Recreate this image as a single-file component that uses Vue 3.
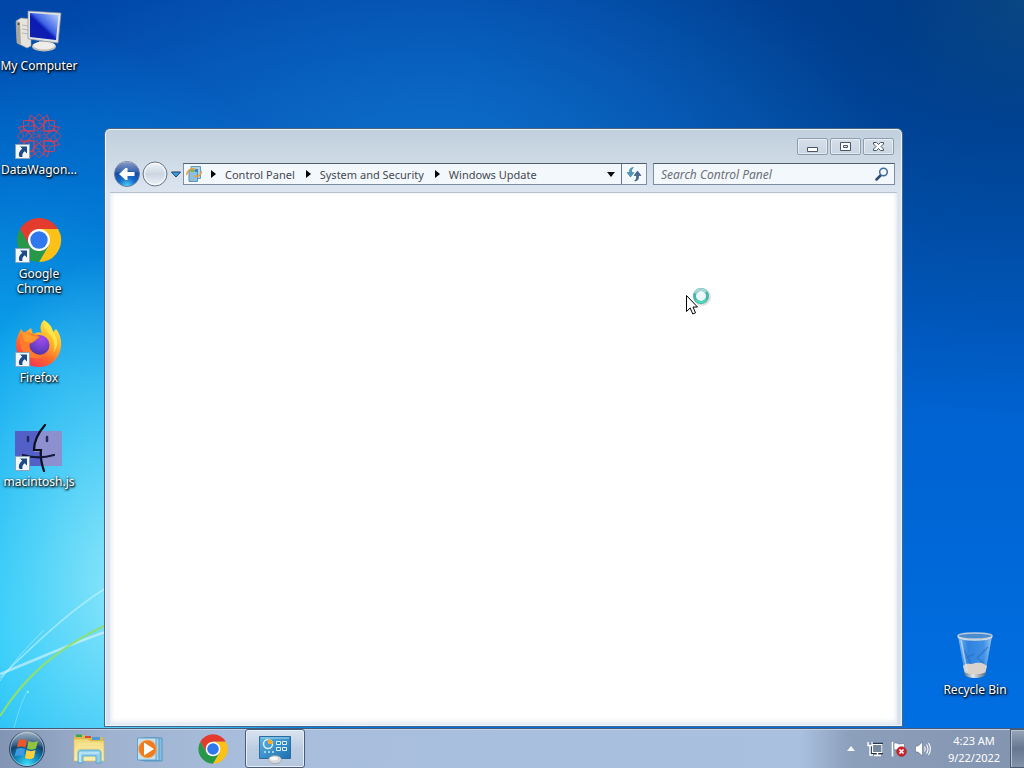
<script setup>
import { ref } from 'vue';

const search = ref('');

const shortcuts = [
  { id: 'computer', label: 'My Computer', linked: false },
  { id: 'wagon', label: 'DataWagon...', linked: true },
  { id: 'chrome', label: 'Google Chrome', linked: true },
  { id: 'firefox', label: 'Firefox', linked: true },
  { id: 'mac', label: 'macintosh.js', linked: true }
];

const crumbs = ['Control Panel', 'System and Security', 'Windows Update'];

const tasks = [
  { id: 'explorer', label: 'Windows Explorer', active: false },
  { id: 'media', label: 'Windows Media Player', active: false },
  { id: 'chrome', label: 'Google Chrome', active: false },
  { id: 'panel', label: 'Control Panel', active: true }
];

// angles of the rosette petals
const petals = [0, 45, 90, 135, 180, 225, 270, 315];
</script>

<template>
  <div class="screen">
    <!-- Icon library -->
    <svg class="library" aria-hidden="true">
      <defs>
        <linearGradient id="g-screen" x1="0" y1="1" x2="1" y2="0">
          <stop offset="0" stop-color="#1322a8" />
          <stop offset="0.45" stop-color="#0a1cb4" />
          <stop offset="0.55" stop-color="#3c62e4" />
          <stop offset="1" stop-color="#bcd6ff" />
        </linearGradient>
        <linearGradient id="g-fox" x1="0.8" y1="0" x2="0.2" y2="1">
          <stop offset="0" stop-color="#fff04a" />
          <stop offset="0.35" stop-color="#ffb52c" />
          <stop offset="0.65" stop-color="#ff6a2e" />
          <stop offset="1" stop-color="#f0265c" />
        </linearGradient>
        <radialGradient id="g-globe" cx="0.6" cy="0.2" r="0.9">
          <stop offset="0" stop-color="#a04cf0" />
          <stop offset="0.6" stop-color="#6a3fc8" />
          <stop offset="1" stop-color="#4a2f9a" />
        </radialGradient>
        <linearGradient id="g-bin" x1="0" y1="0" x2="1" y2="0">
          <stop offset="0" stop-color="#a5cdf4" stop-opacity="0.8" />
          <stop offset="0.3" stop-color="#4d91e0" stop-opacity="0.6" />
          <stop offset="0.75" stop-color="#6aa8ea" stop-opacity="0.6" />
          <stop offset="1" stop-color="#c2dcf6" stop-opacity="0.8" />
        </linearGradient>
        <linearGradient id="g-base" x1="0" y1="0" x2="1" y2="0">
          <stop offset="0" stop-color="#5b6f85" />
          <stop offset="0.4" stop-color="#e4e9ed" />
          <stop offset="1" stop-color="#54677c" />
        </linearGradient>
        <radialGradient id="g-orb" cx="0.5" cy="0.95" r="0.9">
          <stop offset="0" stop-color="#3fe0f8" />
          <stop offset="0.35" stop-color="#1390c4" />
          <stop offset="0.7" stop-color="#123f6c" />
          <stop offset="1" stop-color="#4d6f92" />
        </radialGradient>
        <linearGradient id="g-gloss" x1="0" y1="0" x2="0" y2="1">
          <stop offset="0" stop-color="#fff" stop-opacity="0.75" />
          <stop offset="1" stop-color="#fff" stop-opacity="0.15" />
        </linearGradient>
        <radialGradient id="g-back" cx="0.5" cy="1" r="0.9">
          <stop offset="0" stop-color="#4fd8ff" />
          <stop offset="0.4" stop-color="#1769c8" />
          <stop offset="1" stop-color="#12358c" />
        </radialGradient>
        <linearGradient id="g-forward" x1="0" y1="0" x2="0" y2="1">
          <stop offset="0" stop-color="#f3f6fa" />
          <stop offset="0.5" stop-color="#ccd6e2" />
          <stop offset="1" stop-color="#eef3f8" />
        </linearGradient>
        <linearGradient id="g-folder" x1="0" y1="0" x2="0" y2="1">
          <stop offset="0" stop-color="#f2d978" />
          <stop offset="1" stop-color="#fbf0b0" />
        </linearGradient>
        <linearGradient id="g-panel" x1="0" y1="0" x2="1" y2="1">
          <stop offset="0" stop-color="#5bb4e4" />
          <stop offset="1" stop-color="#1d6fb0" />
        </linearGradient>
      </defs>

      <symbol id="i-computer" viewBox="0 0 48 48">
        <path d="M1 13 L6 10 L16 11 V38 L12 40 L2 35 Z" fill="#e6e4dc" stroke="#9c9a94" stroke-width="0.6" />
        <path d="M1 13 L5 14 L6 37 L2 35 Z" fill="#a8a79f" />
        <path d="M7 17 L13 18 M7 21 L13 22 M7 25 L13 26" stroke="#b7b5ad" stroke-width="1" />
        <circle cx="3.500" cy="16" r="1" fill="#33422f" />
        <path d="M24 33 L34 34 L34 38 L25 38 Z" fill="#bebdb7" />
        <ellipse cx="29" cy="38.500" rx="12" ry="5" fill="#bfbdb7" />
        <ellipse cx="29" cy="37.500" rx="11" ry="4" fill="#eeede9" />
        <path d="M13 3 L46 5 L43 35 L13 31 Z" fill="#dfe3e5" stroke="#8b9299" stroke-width="0.7" />
        <path d="M15 5 L43.500 7 L41 32 L15 29 Z" fill="url(#g-screen)" />
      </symbol>

      <symbol id="i-wagon" viewBox="0 0 48 48">
        <g fill="none" stroke="#c9405f" stroke-width="0.9">
          <g v-for="a in petals" :key="a" :transform="`rotate(${a} 24 24)`">
            <path d="M24 17 L17 9 L24 2 L31 9 Z" />
            <path d="M19 5 V13 L24 17 L29 13 V5 M19 13 L14 15 M15 3 L24 9 L33 3" />
            <path d="M21 18 L27 18 L24 24" opacity="0.6" />
          </g>
        </g>
      </symbol>

      <symbol id="i-chrome" viewBox="0 0 48 48">
        <path d="M5 13 A22 22 0 0 1 43.100 13 H24 L14.500 29.500 Z" fill="#e33b2e" />
        <path d="M43.100 13 A22 22 0 0 1 24 46 L33.500 29.500 L24 13 Z" fill="#fbc116" />
        <path d="M24 46 A22 22 0 0 1 5 13 L14.500 29.500 H33.500 Z" fill="#279847" />
        <circle cx="24" cy="24" r="11" fill="#fff" />
        <circle cx="24" cy="24" r="8.700" fill="#2f78ee" />
      </symbol>

      <symbol id="i-firefox" viewBox="0 0 48 48">
        <path d="M29 0 C34 3 37 7 38 12 L41 9 C47 16 48 27 43 36 C38 44 31 47 24 47 C11 47 1 37 1 25 C1 18 4 13 6 9 L9 13 L16 8 L18 14 C22 12 25 12 27 13 C24 8 26 3 29 0 Z" fill="url(#g-fox)" />
        <circle cx="24.500" cy="25" r="10" fill="url(#g-globe)" />
        <path d="M5 15 C11 9 16 15 22 15 L25 17 L20 21 L17 23 L13 24 C14 32 22 37 31 34 C20 44 3 37 5 15 Z" fill="#ff7b2b" />
        <path d="M7 14 L9 12 L14 14 L18 16 L23 17 L17 22 L10 22 Z" fill="#ff9a2e" />
        <path d="M29 1 C28 9 35 13 38 19 C40 24 40 29 38 33 C44 26 43 17 38 12 C37 7 34 3 29 1 Z" fill="#ffe545" />
      </symbol>

      <symbol id="i-mac" viewBox="0 0 48 48">
        <path d="M0 7 H27 C22 15 19 22 19 28 H27 L28 42 H0 Z" fill="#5360c8" />
        <path d="M27 7 H47 V42 H28 L27 28 H19 C19 22 22 15 27 7 Z" fill="#8d90cf" />
        <path d="M13 13 V17 M32 13 V17" stroke="#26295c" stroke-width="2.500" stroke-linecap="round" />
        <path d="M30 1 C23 9 19 18 19 26 H26 C25 33 27 41 29 47" fill="none" stroke="#0d0f1c" stroke-width="2.200" stroke-linecap="round" />
        <path d="M8 31 C18 34 29 34 39 31" fill="none" stroke="#15183a" stroke-width="2.200" stroke-linecap="round" />
      </symbol>

      <symbol id="i-bin" viewBox="0 0 48 48">
        <path d="M7 4 L14 43 C17 47 31 47 34 43 L41 4 Z" fill="url(#g-bin)" />
        <path d="M12 34 C15 30 20 33 24 31 C29 30 33 31 36 34 L34 42 C29 45 19 45 14 42 Z" fill="#d9d3cc" />
        <path d="M13 40 L14 43 C17 47 31 47 34 43 L35 40 C30 43 18 43 13 40 Z" fill="url(#g-base)" />
        <path d="M13 18 L20 32 M37 15 L26 26 L33 31 M15 26 L23 22" stroke="#2b6cba" stroke-width="1.200" fill="none" opacity="0.7" />
        <path d="M10 8 L16 39" stroke="#dcecfb" stroke-width="1.500" opacity="0.6" />
        <ellipse cx="24" cy="4" rx="17" ry="3" fill="#4b8bcf" stroke="#b8cbd9" stroke-width="1.500" />
        <path d="M7 5 C12 9 36 9 41 5" fill="none" stroke="#d3dce1" stroke-width="1.500" />
      </symbol>

      <symbol id="i-link" viewBox="0 0 15 15">
        <path d="M0.500 0.500 H14.500 V14.500 H0.500 Z" fill="#f3f8fd" stroke="#8ba4bd" />
        <path d="M5 2.500 H12 V9.500 L9.700 7.200 C7.500 9 7 10.500 7.500 13 H4.500 C3 10 4.500 7 7.300 4.800 Z" fill="#1d4b86" />
      </symbol>

      <symbol id="i-explorer" viewBox="0 0 32 32">
        <path d="M1 4 L3 2 H11 L13 4 H30 V27 H1 Z" fill="#dfb84f" />
        <path d="M3 1.500 H9 V4 H3 Z" fill="#35a853" />
        <path d="M12 3 H18 V5 H12 Z" fill="#d8492f" />
        <path d="M19 4 H27 V7 H19 Z" fill="#4b9bd8" />
        <path d="M1 6 H15 L17 8 H31 V28 H1 Z" fill="url(#g-folder)" stroke="#d9b955" stroke-width="0.600" />
        <path d="M5 11 H27 M5 14 H27" stroke="#f8e9a0" stroke-width="1" />
        <path d="M5 30 V20 C5 18 6 17 8 17 H25 C27 17 28 18 28 20 V30 H23 V23 H10 V30 Z" fill="#8fd0ee" stroke="#4d9fc9" stroke-width="0.800" />
        <path d="M7 29 V20 H26" fill="none" stroke="#dff4fc" stroke-width="1.200" />
      </symbol>

      <symbol id="i-media" viewBox="0 0 32 32">
        <path d="M9 5 H27 V28 H9 Z" fill="#84bfe3" stroke="#4b90be" stroke-width="0.800" />
        <path d="M6 5 H24 V27.500 H6 Z" fill="#a5d2ec" stroke="#4b90be" stroke-width="0.800" />
        <path d="M2.500 5 H21 V27 H2.500 Z" fill="#c4e1f2" stroke="#5a9cc6" stroke-width="0.900" />
        <circle cx="12.500" cy="16" r="9" fill="#ee7d22" stroke="#f6b06c" stroke-width="0.800" />
        <path d="M9 9.500 L19 16 L9 22.500 Z" fill="#fff" />
      </symbol>

      <symbol id="i-panel" viewBox="0 0 32 32">
        <path d="M0.500 3.500 H31.500 V25.500 H0.500 Z" fill="url(#g-panel)" stroke="#2a6c9f" />
        <path d="M2 5 H30" stroke="#a4d9f4" stroke-width="1" />
        <circle cx="9" cy="11" r="4.500" fill="none" stroke="#d9f0fb" stroke-width="1.500" />
        <path d="M9 11 V6 A5 5 0 0 1 14 11 Z" fill="#f5a92c" />
        <path d="M17.500 8.500 H21.500 V11.500 H17.500 Z M23.500 8.500 H27.500 V11.500 H23.500 Z M17.500 14.500 H21.500 V17.500 H17.500 Z M23.500 14.500 H27.500 V17.500 H23.500 Z" fill="#2b82bf" stroke="#dff3fc" />
        <path d="M5 19 H7 M9 19 H11 M13 19 H15" stroke="#c4e7f8" stroke-width="1.500" />
        <ellipse cx="16" cy="26.500" rx="6.500" ry="4" fill="#d8dadb" stroke="#8f9599" stroke-width="0.600" />
        <ellipse cx="15" cy="25.500" rx="4" ry="1.800" fill="#f7f8f8" />
      </symbol>
    </svg>

    <main class="desktop">
      <!-- Wallpaper light streaks -->
      <svg class="streaks" viewBox="0 0 106 230" aria-hidden="true">
        <g fill="none">
          <path d="M0 180 C30 150 70 112 106 90" stroke="#d9fbff" stroke-width="1.500" opacity="0.5" />
          <path d="M0 176 C40 160 80 142 106 134" stroke="#dff6ff" stroke-width="2.500" opacity="0.6" />
          <path d="M0 183 C14 163 26 150 44 132" stroke="#b8f2ff" stroke-width="1" opacity="0.6" />
          <path d="M0 218 C24 180 54 152 106 127" stroke="#8fe070" stroke-width="2" />
          <path d="M14 230 C18 215 22 202 28 192" stroke="#9feeff" stroke-width="1" opacity="0.5" />
        </g>
        <circle cx="28" cy="194" r="1" fill="#8affd8" />
      </svg>

      <nav class="shortcuts" aria-label="Desktop">
        <a v-for="item in shortcuts" :key="item.id" class="shortcut" href="#">
          <span class="picture">
            <svg class="glyph"><use :href="`#i-${item.id}`" /></svg>
            <svg v-if="item.linked" class="link-mark"><use href="#i-link" /></svg>
          </span>
          <span class="caption">{{ item.label }}</span>
        </a>
      </nav>
      <a class="shortcut bin" href="#">
        <span class="picture">
          <svg class="glyph"><use href="#i-bin" /></svg>
        </span>
        <span class="caption">Recycle Bin</span>
      </a>

      <section class="window" aria-label="Windows Update">
        <div class="titlebar">
          <button class="frame-button" type="button" aria-label="Minimize">
            <svg width="13" height="13" viewBox="0 0 13 13"><path d="M1.500 7.500 H11.500 V11.500 H1.500 Z" fill="#fff" stroke="#4b5568" /></svg>
          </button>
          <button class="frame-button" type="button" aria-label="Maximize">
            <svg width="13" height="13" viewBox="0 0 13 13">
              <path d="M1.500 2.500 H11.500 V10.500 H1.500 Z" fill="#fff" stroke="#4b5568" />
              <path d="M4.500 5.500 H8.500 V7.500 H4.500 Z" fill="#dfe6ee" stroke="#4b5568" />
            </svg>
          </button>
          <button class="frame-button" type="button" aria-label="Close">
            <svg width="13" height="13" viewBox="0 0 13 13"><path d="M1.500 2.500 H4.500 L6.500 4.500 L8.500 2.500 H11.500 V4 L9 6.500 L11.500 9 V10.500 H8.500 L6.500 8.500 L4.500 10.500 H1.500 V9 L4 6.500 L1.500 4 Z" fill="#fff" stroke="#4b5568" /></svg>
          </button>
        </div>

        <div class="toolbar">
          <div class="travel">
            <button class="plain" type="button" aria-label="Back">
              <svg width="28" height="28" viewBox="0 0 28 28">
                <circle cx="14" cy="14" r="12.500" fill="url(#g-back)" stroke="#6c7f9d" />
                <path d="M2.500 13 A11.500 11.500 0 0 1 25.500 13 Q14 9 2.500 13 Z" fill="url(#g-gloss)" opacity="0.7" />
                <path d="M6 14 L12.500 8 H14.500 V12 H21.500 V16 H14.500 V20 H12.500 Z" fill="#fff" />
              </svg>
            </button>
            <button class="plain" type="button" aria-label="Forward">
              <svg width="28" height="28" viewBox="0 0 28 28">
                <circle cx="14" cy="14" r="12" fill="url(#g-forward)" stroke="#6b7687" />
                <circle cx="14" cy="14" r="10.500" fill="none" stroke="#fff" opacity="0.8" />
              </svg>
            </button>
            <button class="plain recent" type="button" aria-label="Recent pages">
              <svg width="10" height="7" viewBox="0 0 10 7"><path d="M0.500 1 H9.500 L5 6 Z" fill="#3f9fdc" stroke="#1d3c63" /></svg>
            </button>
          </div>

          <div class="address">
            <svg class="place" viewBox="0 0 16 16" aria-hidden="true">
              <path d="M5 0.500 H14.500 V12.500 H5 Z" fill="#a9d4ea" stroke="#6799b8" />
              <path d="M3 4.500 H11.500 V15.500 H3 Z" fill="#8fbfdc" stroke="#5f91b3" />
              <path d="M5 3 H8 V6 H5 Z" fill="#7cb84a" />
              <path d="M9 3 H12 V6 H9 Z" fill="#3f83cd" />
              <path d="M1 9 C0 5 5 2 9 3 M15 5 C16 9 12 11 8 10" fill="none" stroke="#e9a13b" stroke-width="1.500" />
            </svg>
            <template v-for="crumb in crumbs" :key="crumb">
              <svg class="step" viewBox="0 0 5 8" aria-hidden="true"><path d="M0 0 L5 4 L0 8 Z" fill="#000" /></svg>
              <a class="crumb" href="#">{{ crumb }}</a>
            </template>
            <button class="plain previous" type="button" aria-label="Previous locations">
              <svg width="8" height="5" viewBox="0 0 8 5"><path d="M0 0 H8 L4 5 Z" fill="#0c0c18" /></svg>
            </button>
            <button class="plain refresh" type="button" aria-label="Refresh">
              <svg width="16" height="16" viewBox="0 0 16 16">
                <path d="M7.500 1.500 C5.500 1.500 3.500 2.500 3.500 5 V6.500 H1 L4.500 11 L8 6.500 H5.500 V5 C5.500 3.500 6.500 2.500 7.500 1.500 Z" fill="#4a9cbd" stroke="#2d6788" stroke-width="0.500" />
                <path d="M8.500 15 C10.500 15 12.500 14 12.500 11.500 V9.500 H15 L11.500 5 L8 9.500 H10.500 V11.500 C10.500 13 9.500 14 8.500 15 Z" fill="#466d94" stroke="#22385a" stroke-width="0.500" />
              </svg>
            </button>
          </div>

          <form class="search" @submit.prevent>
            <input v-model="search" class="query" type="text" placeholder="Search Control Panel" aria-label="Search Control Panel" />
            <button class="plain lens" type="submit" aria-label="Search">
              <svg width="14" height="14" viewBox="0 0 14 14">
                <path d="M1.500 12.500 L6 8" stroke="#2c4a75" stroke-width="2.500" stroke-linecap="round" />
                <circle cx="8.500" cy="5" r="3.800" fill="#f4faff" stroke="#3d6c99" stroke-width="1.500" />
              </svg>
            </button>
          </form>
        </div>

        <div class="content"></div>
      </section>

      <!-- Busy pointer -->
      <svg class="pointer" viewBox="0 0 30 30" aria-hidden="true">
        <circle cx="17" cy="11" r="7" fill="none" stroke="#000" stroke-opacity="0.120" stroke-width="4" />
        <circle cx="16" cy="10" r="6.500" fill="#eef8fa" stroke="#49b7a4" stroke-width="3" />
        <path d="M10 7 A6.500 6.500 0 0 1 21 6" fill="none" stroke="#a9d8d8" stroke-width="2.500" />
        <path d="M11 14 A6.500 6.500 0 0 0 21 14" fill="none" stroke="#4fe0b8" stroke-width="1.500" />
        <path d="M1.500 9.500 V25.500 L5.200 22 L7.800 28 L10.500 26.800 L8 21 H12.500 Z" fill="#fff" stroke="#000" />
      </svg>
    </main>

    <footer class="taskbar">
      <button class="plain start" type="button" aria-label="Start">
        <svg width="38" height="38" viewBox="0 0 38 38">
          <circle cx="19" cy="19" r="17.500" fill="url(#g-orb)" stroke="#32485f" />
          <circle cx="19" cy="19" r="16.500" fill="none" stroke="#b5d4e6" stroke-opacity="0.600" />
          <path d="M3 17 A16 16 0 0 1 35 17 Q19 13 3 17 Z" fill="url(#g-gloss)" opacity="0.600" />
          <path d="M10.500 10.500 C13.500 8.500 16 9 19 10.500 L17.500 17.500 C14.500 16 12 16 9 17.500 Z" fill="#e8582b" />
          <path d="M20.500 11 C23.500 12.500 26.500 12.500 30 11 L28 18.500 C25 20 22 20 19 18.500 Z" fill="#8fc43c" />
          <path d="M8.500 19 C11.500 17.500 14 17.500 17 19 L15.500 26.500 C12.500 25 10 25 6.500 26.500 Z" fill="#3d9ae0" />
          <path d="M18.500 20 C21.500 21.500 24.500 21.500 27.500 20 L26 27.500 C23 29.500 20 29.500 17 28 Z" fill="#fcd03c" />
        </svg>
      </button>

      <nav class="tasks" aria-label="Taskbar">
        <button v-for="task in tasks" :key="task.id" class="task" :class="{ active: task.active }" type="button" :aria-label="task.label">
          <svg class="task-icon"><use :href="`#i-${task.id}`" /></svg>
        </button>
      </nav>

      <div class="tray">
        <button class="plain" type="button" aria-label="Show hidden icons">
          <svg width="8" height="5" viewBox="0 0 8 5"><path d="M0 5 L4 0 L8 5 Z" fill="#f4f8fc" /></svg>
        </button>
        <button class="plain" type="button" aria-label="Network">
          <svg width="16" height="16" viewBox="0 0 16 16">
            <path d="M5 3 H15.500 V12 H5 Z" fill="#6e8098" stroke="#26364a" stroke-width="2.500" />
            <path d="M5.500 3.500 H15 V11.500 H5.500 Z" fill="#74879f" stroke="#fff" stroke-width="1.200" />
            <path d="M7 14.500 H14 M10.500 12 V14" stroke="#fff" stroke-width="1.400" />
            <path d="M1 1 V4.500 H5 V1 M3 4.500 V14 H6" fill="none" stroke="#fff" stroke-width="1.400" />
          </svg>
        </button>
        <button class="plain" type="button" aria-label="Action Center">
          <svg width="16" height="16" viewBox="0 0 16 16">
            <path d="M1.500 1 V15.500" stroke="#fff" stroke-width="1.600" />
            <path d="M3 2 C6 1 7 3.500 9 3 C11 2.500 12 2.500 13.500 3 V9 C11 8.500 10 10 8 9.500 C6 9 5 8.500 3 9 Z" fill="#fff" stroke="#45566c" stroke-width="0.500" />
            <circle cx="10.500" cy="10.500" r="4.800" fill="#d5222b" stroke="#8c1820" stroke-width="0.600" />
            <path d="M8.500 8.500 L12.500 12.500 M12.500 8.500 L8.500 12.500" stroke="#fff" stroke-width="1.700" />
          </svg>
        </button>
        <button class="plain" type="button" aria-label="Volume">
          <svg width="16" height="16" viewBox="0 0 16 16">
            <path d="M0.500 5 H3 L7.500 1 V15 L3 11 H0.500 Z" fill="#fff" stroke="#4c5d73" stroke-width="0.500" />
            <path d="M9.500 5.500 C10.500 7 10.500 9 9.500 10.500 M11.500 3.500 C13.500 6 13.500 10 11.500 12.500 M13.500 2 C16 5.500 16 10.500 13.500 14" fill="none" stroke="#fff" stroke-width="1.100" />
          </svg>
        </button>
      </div>

      <div class="clock">
        <time>4:23 AM</time>
        <time>9/22/2022</time>
      </div>
      <button class="peek" type="button" aria-label="Show desktop"></button>
    </footer>
  </div>
</template>

<style>
body {
  margin: 0;
}
</style>

<style scoped>
.screen {
  display: flex;
  flex-direction: column;
  min-height: 100vh;
  font-family: "Noto Sans", "Open Sans", sans-serif;
  font-size: 12px;
  line-height: 15px;
  overflow: hidden;
}

.screen *,
.screen *::before {
  box-sizing: border-box;
}

.library {
  position: absolute;
  width: 0;
  height: 0;
}

.plain {
  display: flex;
  align-items: center;
  justify-content: center;
  padding: 0;
  border: 0;
  background: none;
}

.desktop {
  position: relative;
  display: flex;
  flex: 1;
  justify-content: space-between;
  background:
    radial-gradient(circle 130px at 100% 0, rgba(30, 100, 140, 0.3), transparent),
    radial-gradient(ellipse 190px 330px at 12% 80%, rgba(170, 244, 252, 0.8), rgba(130, 232, 252, 0.5) 50%, transparent),
    radial-gradient(ellipse 460px 620px at 0 88%, #1cc4f8, rgba(14, 172, 240, 0.9) 45%, rgba(0, 135, 224, 0.55) 75%, transparent),
    radial-gradient(ellipse 460px 280px at 42% 24%, rgba(20, 125, 212, 0.7), transparent),
    radial-gradient(ellipse 560px 420px at 100% 0, rgba(0, 48, 100, 0.6), transparent),
    linear-gradient(#0046a8, #0056bc 30%, #0062d0 55%, #006fe2);
}

.streaks {
  position: absolute;
  bottom: 0;
  left: 0;
  width: 106px;
  height: 230px;
}

.shortcuts {
  display: flex;
  flex-direction: column;
  width: 78px;
}

.shortcut {
  position: relative;
  display: flex;
  flex-direction: column;
  align-items: center;
  gap: 2px;
  height: 104px;
  padding-top: 8px;
  color: #fff;
  text-decoration: none;
}

.bin {
  align-self: flex-end;
  width: 98px;
}

.picture {
  position: relative;
  height: 48px;
}

.glyph {
  display: block;
  width: 48px;
  height: 48px;
}

.link-mark {
  position: absolute;
  bottom: 1px;
  left: 0;
  width: 15px;
  height: 15px;
}

.caption {
  text-align: center;
  text-shadow: 1px 1px 2px #000, 0 1px 3px #000;
}

.window {
  position: absolute;
  top: 128px;
  right: 121px;
  bottom: 1px;
  left: 104px;
  display: flex;
  flex-direction: column;
  border: 1px solid #46648c;
  border-top-color: #4c6585;
  border-radius: 6px 6px 0 0;
  background: linear-gradient(#c0cfdc, #cddae5 30px, #dce5ef 62px, #d8e2ed);
  box-shadow: inset 0 0 0 1px #eaf4fb;
}

.titlebar {
  display: flex;
  justify-content: flex-end;
  gap: 2px;
  padding: 9px 8px 6px;
}

.frame-button {
  display: flex;
  align-items: center;
  justify-content: center;
  width: 31px;
  height: 17px;
  padding: 0;
  border: 1px solid #8e9cb0;
  border-radius: 2px;
  background: linear-gradient(#d5dfe9, #c9d5e2);
  box-shadow: inset 0 0 0 1px rgba(255, 255, 255, 0.5);
}

.toolbar {
  display: flex;
  align-items: center;
  height: 30px;
  margin-bottom: 1px;
  padding: 0 7px 4px 8px;
}

.travel {
  display: flex;
  height: 28px;
  width: 70px;
}

.recent {
  width: 14px;
}

.address {
  display: flex;
  flex: 1;
  align-items: center;
  height: 22px;
  padding-left: 2px;
  border: 1px solid #7d8da3;
  border-top-color: #4f5d70;
  background: #f3f8fd;
}

.place {
  width: 16px;
  height: 16px;
}

.step {
  width: 5px;
  height: 8px;
  margin: 0 9px;
}

.crumb {
  margin-right: 1px;
  color: #45484f;
  font-size: 11px;
  text-decoration: none;
  white-space: nowrap;
}

.crumb + .step {
  margin-left: 10px;
}

.previous {
  width: 20px;
  height: 20px;
  margin-left: auto;
}

.refresh {
  width: 25px;
  height: 20px;
  border-left: 1px solid #66758a;
}

.search {
  display: flex;
  align-items: center;
  width: 242px;
  height: 22px;
  margin-left: 6px;
  border: 1px solid #7d8da3;
  border-top-color: #4f5d70;
  background: #f3f8fd;
}

.query {
  flex: 1;
  min-width: 0;
  padding: 0 7px;
  border: 0;
  outline: 0;
  background: none;
  color: #333;
  font-family: inherit;
  font-size: 12px;
}

.query::placeholder {
  color: #6b6f76;
  font-style: italic;
  opacity: 1;
}

.lens {
  width: 24px;
  height: 20px;
}

.content {
  flex: 1;
  margin: 0 5px 1px;
  border-top: 1px solid #b4c0ce;
  background: #fff;
  box-shadow: inset 0 -2px 5px 1px #dfe7f0;
}

.pointer {
  position: absolute;
  top: 286px;
  left: 685px;
  width: 30px;
  height: 30px;
}

.taskbar {
  display: flex;
  height: 40px;
  border-top: 1px solid #45597a;
  background: linear-gradient(to right, #8294b3, #9fb3d0 110px, #a7bddb 240px, #a9c1df 800px, #8c9fbb 850px, #8294af);
  box-shadow: inset 0 1px 0 #c3d3e6;
}

.start {
  width: 54px;
  margin-right: 5px;
}

.tasks {
  display: flex;
  flex: 1;
  gap: 2px;
}

.task {
  display: flex;
  align-items: center;
  justify-content: center;
  width: 60px;
  padding: 0;
  border: 1px solid transparent;
  border-radius: 3px;
  background: none;
}

.active {
  border-color: #4a5c78;
  background: linear-gradient(#dae4f0, #bccde2 50%, #b4c7df);
  box-shadow: inset 0 0 0 1px #e6eef7;
}

.task-icon {
  width: 32px;
  height: 32px;
}

.tray {
  display: flex;
  align-items: center;
  gap: 8px;
  margin-right: 7px;
}

.tray .plain:first-child {
  margin-right: 4px;
}

.clock {
  display: flex;
  flex-direction: column;
  justify-content: center;
  width: 72px;
  color: #fff;
  font-size: 11px;
  line-height: 17px;
  text-align: center;
}

.peek {
  width: 14px;
  padding: 0;
  border: 1px solid #4c5a70;
  border-right: 0;
  background: linear-gradient(#98a6b9, #66768e 50%, #8393aa);
  box-shadow: inset 1px 1px 0 #b5c2d2;
}
</style>
